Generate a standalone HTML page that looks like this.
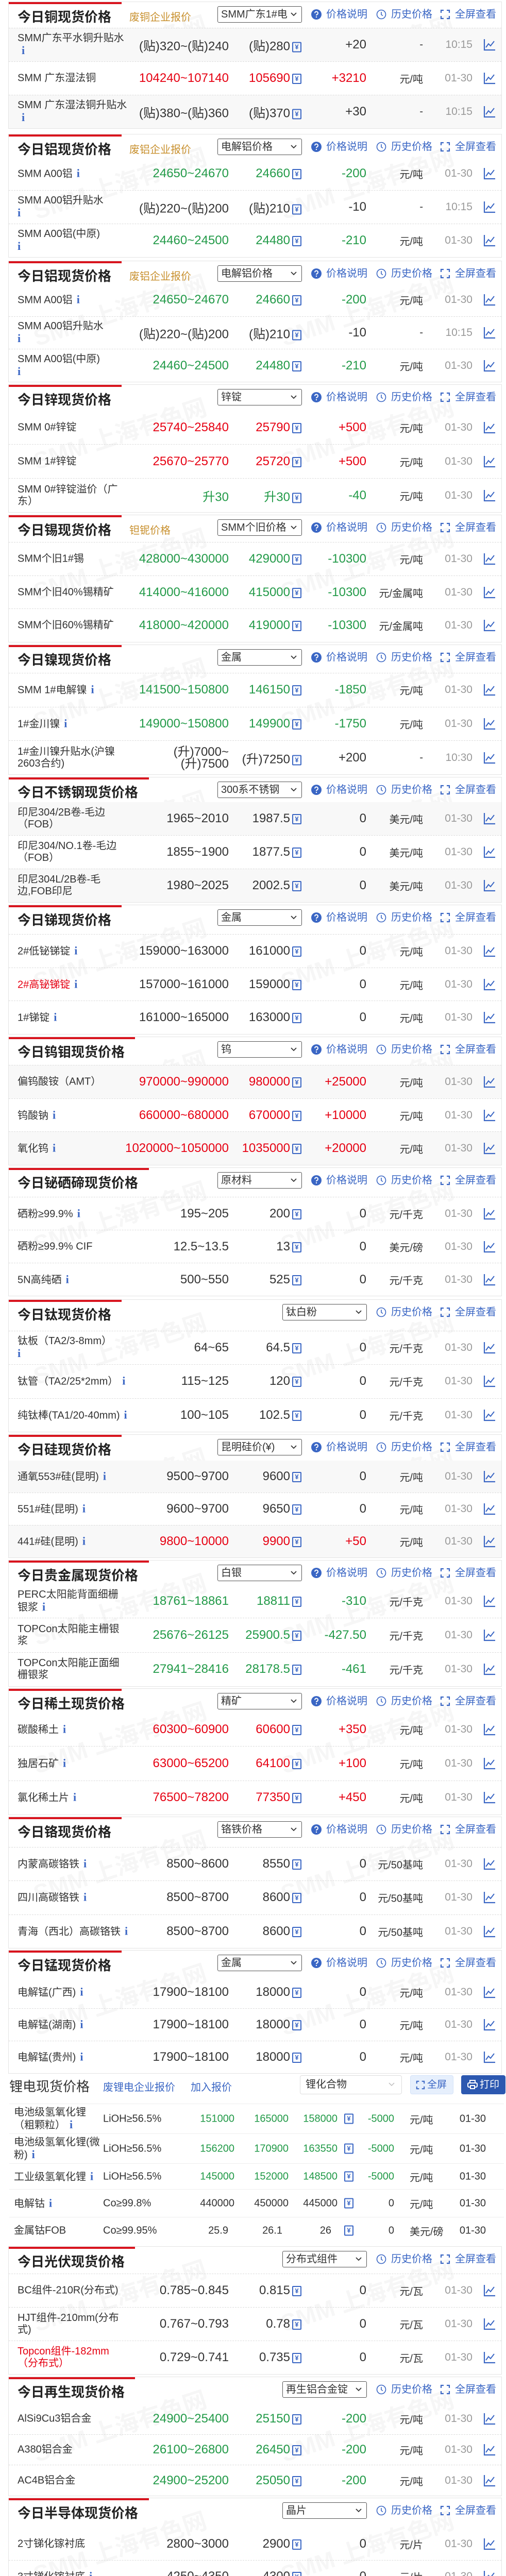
<!DOCTYPE html>
<html><head><meta charset="utf-8">
<style>
*{margin:0;padding:0;box-sizing:border-box}
html,body{width:982px;height:5097px;overflow:hidden;background:#fff}
body{font-family:"Liberation Sans","Noto Sans CJK SC",sans-serif;color:#333}
#pg{position:relative;width:982px;height:5097px;overflow:hidden}
.card{position:absolute;left:16px;width:958px;border:1px solid #e4e4e4;background:#fff;overflow:hidden;display:flex;flex-direction:column}
.bar{position:absolute;left:0;top:0;height:4px;background:#d9141e;z-index:3}
.hd{height:50px;flex:none;position:relative;z-index:2}
.t{position:absolute;left:17px;top:9px;font-size:26px;font-weight:bold;color:#222;white-space:nowrap}
.sub{position:absolute;left:234px;top:13px;font-size:20px;color:#c8902e;white-space:nowrap}
.sel{position:absolute;left:405px;top:8px;width:164px;height:32px;border:1px solid #555;border-radius:3px;font-size:20px;line-height:30px;padding-left:6px;color:#333;white-space:nowrap;overflow:hidden;background:#fff}
.sel.np{left:531px}
.sel svg{position:absolute;right:8px;top:10px}
.lk{position:absolute;top:11px;font-size:20px;color:#3a66c4;white-space:nowrap;line-height:26px}
.lk svg{position:absolute;left:-29px;top:3px}
.l1{left:616px}.l2{left:742px}.l3{left:866px}
.r{flex:1;position:relative;border-top:1px dashed #dcdcdc;z-index:2}
.r:nth-child(4){background:#f8f8f8}
.r>div{position:absolute;top:50%;transform:translateY(-50%);white-space:nowrap}
.n{left:17px;width:215px;font-size:20px;line-height:23px;white-space:normal!important;color:#333}
.n.red{color:#e60012}
em{font-style:normal;font-family:"Liberation Serif",serif;font-weight:bold;color:#3a66c4;font-size:22px;margin-left:8px}
.v{right:529px;font-size:24px}
.a{right:388px;font-size:24px}
.c{right:262px;font-size:24px}
.u{right:152px;font-size:20px}
.d{right:56px;font-size:21px;color:#9a9a9a}
.ch{position:absolute;left:921px;top:50%;margin-top:-12px}
.g{color:#229a48}.rd{color:#e60012}
.y{display:inline-block;width:18px;height:20px;border:2px solid #3a66c4;color:#3a66c4;font-size:13px;line-height:16px;text-align:center;vertical-align:2px;margin-left:4px;font-weight:bold;border-radius:2px}
.wm{position:absolute;font-size:46px;font-weight:bold;color:rgba(0,0,0,0.035);transform:rotate(-18deg);white-space:nowrap;z-index:1;top:60px}
.w1{left:40px}.w2{left:520px}
.li{position:absolute;left:0;top:4025px;width:982px;height:335px;background:#fff;overflow:hidden}
.li .lt{position:absolute;left:18px;top:5px;font-size:26px;color:#333}
.li .ll{position:absolute;top:10px;font-size:20px;color:#3a66c4}
.li .ls{position:absolute;left:582px;top:3px;width:198px;height:37px;border:1px solid #ddd;border-radius:4px;font-size:20px;line-height:35px;padding-left:10px}
.li .ls svg{position:absolute;right:12px;top:12px}
.b1{position:absolute;left:796px;top:3px;width:84px;height:37px;background:#e6effc;border:1px solid #d3e2f8;border-radius:4px;color:#3a66c4;font-size:19px;line-height:35px;padding-left:32px}
.b2{position:absolute;left:895px;top:3px;width:86px;height:37px;background:#2c58b0;border-radius:4px;color:#fff;font-size:19px;line-height:37px;padding-left:36px}
.lr{position:absolute;left:18px;width:960px;border-top:1px solid #eee}
.lr>div{position:absolute;top:50%;transform:translateY(-50%);white-space:nowrap;font-size:20px}
.lr .ln{left:9px;width:170px;white-space:normal;line-height:23px}
.lr .sp{left:182px}
.lr .lo{right:523px}.lr .hi{right:418px}.lr .av{right:323px}.lr .yy{left:646px}
.lr .cg{right:213px}.lr .un{left:777px}.lr .dt{right:35px}
</style></head><body><div id="pg">
<svg width="0" height="0" style="position:absolute;left:0;top:0">
<defs>
<symbol id="q" viewBox="0 0 20 20"><circle cx="10" cy="10" r="10" fill="#3a66c4"/><path d="M7 7.5a3 3 0 1 1 4 2.8c-.8.4-1 .8-1 1.7" stroke="#fff" stroke-width="2" fill="none"/><circle cx="10" cy="15" r="1.2" fill="#fff"/></symbol>
<symbol id="k" viewBox="0 0 20 20"><circle cx="10" cy="10" r="8.5" stroke="#3a66c4" stroke-width="1.6" fill="none"/><path d="M10 5v5.5l3 2" stroke="#3a66c4" stroke-width="1.6" fill="none"/></symbol>
<symbol id="f" viewBox="0 0 20 20"><path d="M2 7V2h5M13 2h5v5M18 13v5h-5M7 18H2v-5" stroke="#3a66c4" stroke-width="2.2" fill="none"/></symbol>
<symbol id="c" viewBox="0 0 24 24"><path d="M2 1v21h21" stroke="#3a66c4" stroke-width="2.2" fill="none"/><path d="M5 17l5-7 4 4 7-9" stroke="#3a66c4" stroke-width="2" fill="none"/></symbol>
<symbol id="v" viewBox="0 0 14 10"><path d="M2 2l5 5 5-5" stroke="#333" stroke-width="1.8" fill="none"/></symbol>
</defs></svg>

<div class="card" style="top:3px;height:247px"><div class="bar" style="width:219px"></div><span class="wm w1">SMM 上海有色网</span><span class="wm w2">SMM 上海有色网</span>
<div class="hd"><div class="t">今日铜现货价格</div><div class="sub">废铜企业报价</div><div class="sel">SMM广东1#电<svg width="14" height="10"><use href="#v"/></svg></div><div class="lk l1"><svg width="20" height="20"><use href="#q"/></svg>价格说明</div><div class="lk l2"><svg width="20" height="20"><use href="#k"/></svg>历史价格</div><div class="lk l3"><svg width="20" height="20"><use href="#f"/></svg>全屏查看</div></div>
<div class="r" style="background:#f8f8f8"><div class="n">SMM广东平水铜升贴水<em>i</em></div><div class="v">(贴)320~(贴)240</div><div class="a">(贴)280<span class="y">¥</span></div><div class="c">+20</div><div class="u">-</div><div class="d">10:15</div><svg class="ch" width="24" height="24"><use href="#c"/></svg></div>
<div class="r" style="background:#fff"><div class="n">SMM 广东湿法铜</div><div class="v rd">104240~107140</div><div class="a rd">105690<span class="y">¥</span></div><div class="c rd">+3210</div><div class="u">元/吨</div><div class="d">01-30</div><svg class="ch" width="24" height="24"><use href="#c"/></svg></div>
<div class="r" style="background:#f8f8f8"><div class="n">SMM 广东湿法铜升贴水<em>i</em></div><div class="v">(贴)380~(贴)360</div><div class="a">(贴)370<span class="y">¥</span></div><div class="c">+30</div><div class="u">-</div><div class="d">10:15</div><svg class="ch" width="24" height="24"><use href="#c"/></svg></div>
</div>

<div class="card" style="top:260px;height:240px"><div class="bar" style="width:219px"></div><span class="wm w1">SMM 上海有色网</span><span class="wm w2">SMM 上海有色网</span>
<div class="hd" style="height:44px"><div class="t">今日铝现货价格</div><div class="sub">废铝企业报价</div><div class="sel">电解铝价格<svg width="14" height="10"><use href="#v"/></svg></div><div class="lk l1"><svg width="20" height="20"><use href="#q"/></svg>价格说明</div><div class="lk l2"><svg width="20" height="20"><use href="#k"/></svg>历史价格</div><div class="lk l3"><svg width="20" height="20"><use href="#f"/></svg>全屏查看</div></div>
<div class="r" style="border-top:none"><div class="n">SMM A00铝<em>i</em></div><div class="v g">24650~24670</div><div class="a g">24660<span class="y">¥</span></div><div class="c g">-200</div><div class="u">元/吨</div><div class="d">01-30</div><svg class="ch" width="24" height="24"><use href="#c"/></svg></div>
<div class="r"><div class="n">SMM A00铝升贴水<br><em style="margin:0">i</em></div><div class="v">(贴)220~(贴)200</div><div class="a">(贴)210<span class="y">¥</span></div><div class="c">-10</div><div class="u">-</div><div class="d">10:15</div><svg class="ch" width="24" height="24"><use href="#c"/></svg></div>
<div class="r"><div class="n">SMM A00铝(中原)<br><em style="margin:0">i</em></div><div class="v g">24460~24500</div><div class="a g">24480<span class="y">¥</span></div><div class="c g">-210</div><div class="u">元/吨</div><div class="d">01-30</div><svg class="ch" width="24" height="24"><use href="#c"/></svg></div>
</div>

<div class="card" style="top:506px;height:236px"><div class="bar" style="width:219px"></div><span class="wm w1">SMM 上海有色网</span><span class="wm w2">SMM 上海有色网</span>
<div class="hd" style="height:44px"><div class="t">今日铝现货价格</div><div class="sub">废铝企业报价</div><div class="sel">电解铝价格<svg width="14" height="10"><use href="#v"/></svg></div><div class="lk l1"><svg width="20" height="20"><use href="#q"/></svg>价格说明</div><div class="lk l2"><svg width="20" height="20"><use href="#k"/></svg>历史价格</div><div class="lk l3"><svg width="20" height="20"><use href="#f"/></svg>全屏查看</div></div>
<div class="r" style="border-top:none"><div class="n">SMM A00铝<em>i</em></div><div class="v g">24650~24670</div><div class="a g">24660<span class="y">¥</span></div><div class="c g">-200</div><div class="u">元/吨</div><div class="d">01-30</div><svg class="ch" width="24" height="24"><use href="#c"/></svg></div>
<div class="r"><div class="n">SMM A00铝升贴水<br><em style="margin:0">i</em></div><div class="v">(贴)220~(贴)200</div><div class="a">(贴)210<span class="y">¥</span></div><div class="c">-10</div><div class="u">-</div><div class="d">10:15</div><svg class="ch" width="24" height="24"><use href="#c"/></svg></div>
<div class="r"><div class="n">SMM A00铝(中原)<br><em style="margin:0">i</em></div><div class="v g">24460~24500</div><div class="a g">24480<span class="y">¥</span></div><div class="c g">-210</div><div class="u">元/吨</div><div class="d">01-30</div><svg class="ch" width="24" height="24"><use href="#c"/></svg></div>
</div>

<div class="card" style="top:746px;height:249px"><div class="bar" style="width:219px"></div><span class="wm w1">SMM 上海有色网</span><span class="wm w2">SMM 上海有色网</span>
<div class="hd"><div class="t">今日锌现货价格</div><div class="sel">锌锭<svg width="14" height="10"><use href="#v"/></svg></div><div class="lk l1"><svg width="20" height="20"><use href="#q"/></svg>价格说明</div><div class="lk l2"><svg width="20" height="20"><use href="#k"/></svg>历史价格</div><div class="lk l3"><svg width="20" height="20"><use href="#f"/></svg>全屏查看</div></div>
<div class="r" style="border-top:none"><div class="n">SMM 0#锌锭</div><div class="v rd">25740~25840</div><div class="a rd">25790<span class="y">¥</span></div><div class="c rd">+500</div><div class="u">元/吨</div><div class="d">01-30</div><svg class="ch" width="24" height="24"><use href="#c"/></svg></div>
<div class="r"><div class="n">SMM 1#锌锭</div><div class="v rd">25670~25770</div><div class="a rd">25720<span class="y">¥</span></div><div class="c rd">+500</div><div class="u">元/吨</div><div class="d">01-30</div><svg class="ch" width="24" height="24"><use href="#c"/></svg></div>
<div class="r"><div class="n">SMM 0#锌锭溢价（广东）</div><div class="v g">升30</div><div class="a g">升30<span class="y">¥</span></div><div class="c g">-40</div><div class="u">元/吨</div><div class="d">01-30</div><svg class="ch" width="24" height="24"><use href="#c"/></svg></div>
</div>

<div class="card" style="top:999px;height:248px"><div class="bar" style="width:219px"></div><span class="wm w1">SMM 上海有色网</span><span class="wm w2">SMM 上海有色网</span>
<div class="hd" style="height:52px"><div class="t">今日锡现货价格</div><div class="sub">钽铌价格</div><div class="sel">SMM个旧价格<svg width="14" height="10"><use href="#v"/></svg></div><div class="lk l1"><svg width="20" height="20"><use href="#q"/></svg>价格说明</div><div class="lk l2"><svg width="20" height="20"><use href="#k"/></svg>历史价格</div><div class="lk l3"><svg width="20" height="20"><use href="#f"/></svg>全屏查看</div></div>
<div class="r"><div class="n">SMM个旧1#锡</div><div class="v g">428000~430000</div><div class="a g">429000<span class="y">¥</span></div><div class="c g">-10300</div><div class="u">元/吨</div><div class="d">01-30</div><svg class="ch" width="24" height="24"><use href="#c"/></svg></div>
<div class="r"><div class="n">SMM个旧40%锡精矿</div><div class="v g">414000~416000</div><div class="a g">415000<span class="y">¥</span></div><div class="c g">-10300</div><div class="u">元/金属吨</div><div class="d">01-30</div><svg class="ch" width="24" height="24"><use href="#c"/></svg></div>
<div class="r"><div class="n">SMM个旧60%锡精矿</div><div class="v g">418000~420000</div><div class="a g">419000<span class="y">¥</span></div><div class="c g">-10300</div><div class="u">元/金属吨</div><div class="d">01-30</div><svg class="ch" width="24" height="24"><use href="#c"/></svg></div>
</div>

<div class="card" style="top:1251px;height:253px"><div class="bar" style="width:219px"></div><span class="wm w1">SMM 上海有色网</span><span class="wm w2">SMM 上海有色网</span>
<div class="hd" style="height:54px"><div class="t">今日镍现货价格</div><div class="sel">金属<svg width="14" height="10"><use href="#v"/></svg></div><div class="lk l1"><svg width="20" height="20"><use href="#q"/></svg>价格说明</div><div class="lk l2"><svg width="20" height="20"><use href="#k"/></svg>历史价格</div><div class="lk l3"><svg width="20" height="20"><use href="#f"/></svg>全屏查看</div></div>
<div class="r"><div class="n">SMM 1#电解镍<em>i</em></div><div class="v g">141500~150800</div><div class="a g">146150<span class="y">¥</span></div><div class="c g">-1850</div><div class="u">元/吨</div><div class="d">01-30</div><svg class="ch" width="24" height="24"><use href="#c"/></svg></div>
<div class="r"><div class="n">1#金川镍<em>i</em></div><div class="v g">149000~150800</div><div class="a g">149900<span class="y">¥</span></div><div class="c g">-1750</div><div class="u">元/吨</div><div class="d">01-30</div><svg class="ch" width="24" height="24"><use href="#c"/></svg></div>
<div class="r"><div class="n">1#金川镍升贴水(沪镍2603合约)</div><div class="v" style="text-align:right;line-height:23px">(升)7000~<br>(升)7500</div><div class="a">(升)7250<span class="y">¥</span></div><div class="c">+200</div><div class="u">-</div><div class="d">10:30</div><svg class="ch" width="24" height="24"><use href="#c"/></svg></div>
</div>

<div class="card" style="top:1508px;height:244px"><div class="bar" style="width:272px"></div><span class="wm w1">SMM 上海有色网</span><span class="wm w2">SMM 上海有色网</span>
<div class="hd" style="height:48px"><div class="t">今日不锈钢现货价格</div><div class="sel">300系不锈钢<svg width="14" height="10"><use href="#v"/></svg></div><div class="lk l1"><svg width="20" height="20"><use href="#q"/></svg>价格说明</div><div class="lk l2"><svg width="20" height="20"><use href="#k"/></svg>历史价格</div><div class="lk l3"><svg width="20" height="20"><use href="#f"/></svg>全屏查看</div></div>
<div class="r" style="background:#f8f8f8;border-top:none"><div class="n">印尼304/2B卷-毛边（FOB）</div><div class="v">1965~2010</div><div class="a">1987.5<span class="y">¥</span></div><div class="c">0</div><div class="u">美元/吨</div><div class="d">01-30</div><svg class="ch" width="24" height="24"><use href="#c"/></svg></div>
<div class="r" style="background:#fff"><div class="n">印尼304/NO.1卷-毛边（FOB）</div><div class="v">1855~1900</div><div class="a">1877.5<span class="y">¥</span></div><div class="c">0</div><div class="u">美元/吨</div><div class="d">01-30</div><svg class="ch" width="24" height="24"><use href="#c"/></svg></div>
<div class="r" style="background:#f8f8f8"><div class="n">印尼304L/2B卷-毛边,FOB印尼</div><div class="v">1980~2025</div><div class="a">2002.5<span class="y">¥</span></div><div class="c">0</div><div class="u">美元/吨</div><div class="d">01-30</div><svg class="ch" width="24" height="24"><use href="#c"/></svg></div>
</div>

<div class="card" style="top:1756px;height:252px"><div class="bar" style="width:219px"></div><span class="wm w1">SMM 上海有色网</span><span class="wm w2">SMM 上海有色网</span>
<div class="hd" style="height:56px"><div class="t">今日锑现货价格</div><div class="sel">金属<svg width="14" height="10"><use href="#v"/></svg></div><div class="lk l1"><svg width="20" height="20"><use href="#q"/></svg>价格说明</div><div class="lk l2"><svg width="20" height="20"><use href="#k"/></svg>历史价格</div><div class="lk l3"><svg width="20" height="20"><use href="#f"/></svg>全屏查看</div></div>
<div class="r"><div class="n">2#低铋锑锭<em>i</em></div><div class="v">159000~163000</div><div class="a">161000<span class="y">¥</span></div><div class="c">0</div><div class="u">元/吨</div><div class="d">01-30</div><svg class="ch" width="24" height="24"><use href="#c"/></svg></div>
<div class="r"><div class="n red">2#高铋锑锭<em>i</em></div><div class="v">157000~161000</div><div class="a">159000<span class="y">¥</span></div><div class="c">0</div><div class="u">元/吨</div><div class="d">01-30</div><svg class="ch" width="24" height="24"><use href="#c"/></svg></div>
<div class="r"><div class="n">1#锑锭<em>i</em></div><div class="v">161000~165000</div><div class="a">163000<span class="y">¥</span></div><div class="c">0</div><div class="u">元/吨</div><div class="d">01-30</div><svg class="ch" width="24" height="24"><use href="#c"/></svg></div>
</div>

<div class="card" style="top:2012px;height:250px"><div class="bar" style="width:245px"></div><span class="wm w1">SMM 上海有色网</span><span class="wm w2">SMM 上海有色网</span>
<div class="hd" style="height:54px"><div class="t">今日钨钼现货价格</div><div class="sel">钨<svg width="14" height="10"><use href="#v"/></svg></div><div class="lk l1"><svg width="20" height="20"><use href="#q"/></svg>价格说明</div><div class="lk l2"><svg width="20" height="20"><use href="#k"/></svg>历史价格</div><div class="lk l3"><svg width="20" height="20"><use href="#f"/></svg>全屏查看</div></div>
<div class="r" style="background:#f8f8f8"><div class="n">偏钨酸铵（AMT）</div><div class="v rd">970000~990000</div><div class="a rd">980000<span class="y">¥</span></div><div class="c rd">+25000</div><div class="u">元/吨</div><div class="d">01-30</div><svg class="ch" width="24" height="24"><use href="#c"/></svg></div>
<div class="r" style="background:#fff"><div class="n">钨酸钠<em>i</em></div><div class="v rd">660000~680000</div><div class="a rd">670000<span class="y">¥</span></div><div class="c rd">+10000</div><div class="u">元/吨</div><div class="d">01-30</div><svg class="ch" width="24" height="24"><use href="#c"/></svg></div>
<div class="r" style="background:#f8f8f8"><div class="n">氧化钨<em>i</em></div><div class="v rd">1020000~1050000</div><div class="a rd">1035000<span class="y">¥</span></div><div class="c rd">+20000</div><div class="u">元/吨</div><div class="d">01-30</div><svg class="ch" width="24" height="24"><use href="#c"/></svg></div>
</div>

<div class="card" style="top:2266px;height:250px"><div class="bar" style="width:272px"></div><span class="wm w1">SMM 上海有色网</span><span class="wm w2">SMM 上海有色网</span>
<div class="hd" style="height:56px"><div class="t">今日铋硒碲现货价格</div><div class="sel">原材料<svg width="14" height="10"><use href="#v"/></svg></div><div class="lk l1"><svg width="20" height="20"><use href="#q"/></svg>价格说明</div><div class="lk l2"><svg width="20" height="20"><use href="#k"/></svg>历史价格</div><div class="lk l3"><svg width="20" height="20"><use href="#f"/></svg>全屏查看</div></div>
<div class="r"><div class="n">硒粉≥99.9%<em>i</em></div><div class="v">195~205</div><div class="a">200<span class="y">¥</span></div><div class="c">0</div><div class="u">元/千克</div><div class="d">01-30</div><svg class="ch" width="24" height="24"><use href="#c"/></svg></div>
<div class="r"><div class="n">硒粉≥99.9% CIF</div><div class="v">12.5~13.5</div><div class="a">13<span class="y">¥</span></div><div class="c">0</div><div class="u">美元/磅</div><div class="d">01-30</div><svg class="ch" width="24" height="24"><use href="#c"/></svg></div>
<div class="r"><div class="n">5N高纯硒<em>i</em></div><div class="v">500~550</div><div class="a">525<span class="y">¥</span></div><div class="c">0</div><div class="u">元/千克</div><div class="d">01-30</div><svg class="ch" width="24" height="24"><use href="#c"/></svg></div>
</div>

<div class="card" style="top:2522px;height:258px"><div class="bar" style="width:219px"></div><span class="wm w1">SMM 上海有色网</span><span class="wm w2">SMM 上海有色网</span>
<div class="hd" style="height:60px"><div class="t">今日钛现货价格</div><div class="sel np">钛白粉<svg width="14" height="10"><use href="#v"/></svg></div><div class="lk l2"><svg width="20" height="20"><use href="#k"/></svg>历史价格</div><div class="lk l3"><svg width="20" height="20"><use href="#f"/></svg>全屏查看</div></div>
<div class="r"><div class="n">钛板（TA2/3-8mm）<br><em style="margin:0">i</em></div><div class="v">64~65</div><div class="a">64.5<span class="y">¥</span></div><div class="c">0</div><div class="u">元/千克</div><div class="d">01-30</div><svg class="ch" width="24" height="24"><use href="#c"/></svg></div>
<div class="r"><div class="n">钛管（TA2/25*2mm）<em>i</em></div><div class="v">115~125</div><div class="a">120<span class="y">¥</span></div><div class="c">0</div><div class="u">元/千克</div><div class="d">01-30</div><svg class="ch" width="24" height="24"><use href="#c"/></svg></div>
<div class="r"><div class="n">纯钛棒(TA1/20-40mm)<em>i</em></div><div class="v">100~105</div><div class="a">102.5<span class="y">¥</span></div><div class="c">0</div><div class="u">元/千克</div><div class="d">01-30</div><svg class="ch" width="24" height="24"><use href="#c"/></svg></div>
</div>

<div class="card" style="top:2784px;height:240px"><div class="bar" style="width:219px"></div><span class="wm w1">SMM 上海有色网</span><span class="wm w2">SMM 上海有色网</span>
<div class="hd" style="height:50px"><div class="t">今日硅现货价格</div><div class="sel">昆明硅价(¥)<svg width="14" height="10"><use href="#v"/></svg></div><div class="lk l1"><svg width="20" height="20"><use href="#q"/></svg>价格说明</div><div class="lk l2"><svg width="20" height="20"><use href="#k"/></svg>历史价格</div><div class="lk l3"><svg width="20" height="20"><use href="#f"/></svg>全屏查看</div></div>
<div class="r" style="background:#f8f8f8;border-top:none"><div class="n">通氧553#硅(昆明)<em>i</em></div><div class="v">9500~9700</div><div class="a">9600<span class="y">¥</span></div><div class="c">0</div><div class="u">元/吨</div><div class="d">01-30</div><svg class="ch" width="24" height="24"><use href="#c"/></svg></div>
<div class="r" style="background:#fff"><div class="n">551#硅(昆明)<em>i</em></div><div class="v">9600~9700</div><div class="a">9650<span class="y">¥</span></div><div class="c">0</div><div class="u">元/吨</div><div class="d">01-30</div><svg class="ch" width="24" height="24"><use href="#c"/></svg></div>
<div class="r" style="background:#f8f8f8"><div class="n">441#硅(昆明)<em>i</em></div><div class="v rd">9800~10000</div><div class="a rd">9900<span class="y">¥</span></div><div class="c rd">+50</div><div class="u">元/吨</div><div class="d">01-30</div><svg class="ch" width="24" height="24"><use href="#c"/></svg></div>
</div>

<div class="card" style="top:3028px;height:246px"><div class="bar" style="width:272px"></div><span class="wm w1">SMM 上海有色网</span><span class="wm w2">SMM 上海有色网</span>
<div class="hd" style="height:46px"><div class="t">今日贵金属现货价格</div><div class="sel">白银<svg width="14" height="10"><use href="#v"/></svg></div><div class="lk l1"><svg width="20" height="20"><use href="#q"/></svg>价格说明</div><div class="lk l2"><svg width="20" height="20"><use href="#k"/></svg>历史价格</div><div class="lk l3"><svg width="20" height="20"><use href="#f"/></svg>全屏查看</div></div>
<div class="r" style="border-top:none"><div class="n">PERC太阳能背面细栅银浆<em>i</em></div><div class="v g">18761~18861</div><div class="a g">18811<span class="y">¥</span></div><div class="c g">-310</div><div class="u">元/千克</div><div class="d">01-30</div><svg class="ch" width="24" height="24"><use href="#c"/></svg></div>
<div class="r"><div class="n">TOPCon太阳能主栅银浆</div><div class="v g">25676~26125</div><div class="a g">25900.5<span class="y">¥</span></div><div class="c g">-427.50</div><div class="u">元/千克</div><div class="d">01-30</div><svg class="ch" width="24" height="24"><use href="#c"/></svg></div>
<div class="r"><div class="n">TOPCon太阳能正面细栅银浆</div><div class="v g">27941~28416</div><div class="a g">28178.5<span class="y">¥</span></div><div class="c g">-461</div><div class="u">元/千克</div><div class="d">01-30</div><svg class="ch" width="24" height="24"><use href="#c"/></svg></div>
</div>

<div class="card" style="top:3277px;height:246px"><div class="bar" style="width:219px"></div><span class="wm w1">SMM 上海有色网</span><span class="wm w2">SMM 上海有色网</span>
<div class="hd" style="height:46px"><div class="t">今日稀土现货价格</div><div class="sel">精矿<svg width="14" height="10"><use href="#v"/></svg></div><div class="lk l1"><svg width="20" height="20"><use href="#q"/></svg>价格说明</div><div class="lk l2"><svg width="20" height="20"><use href="#k"/></svg>历史价格</div><div class="lk l3"><svg width="20" height="20"><use href="#f"/></svg>全屏查看</div></div>
<div class="r" style="border-top:none"><div class="n">碳酸稀土<em>i</em></div><div class="v rd">60300~60900</div><div class="a rd">60600<span class="y">¥</span></div><div class="c rd">+350</div><div class="u">元/吨</div><div class="d">01-30</div><svg class="ch" width="24" height="24"><use href="#c"/></svg></div>
<div class="r"><div class="n">独居石矿<em>i</em></div><div class="v rd">63000~65200</div><div class="a rd">64100<span class="y">¥</span></div><div class="c rd">+100</div><div class="u">元/吨</div><div class="d">01-30</div><svg class="ch" width="24" height="24"><use href="#c"/></svg></div>
<div class="r"><div class="n">氯化稀土片<em>i</em></div><div class="v rd">76500~78200</div><div class="a rd">77350<span class="y">¥</span></div><div class="c rd">+450</div><div class="u">元/吨</div><div class="d">01-30</div><svg class="ch" width="24" height="24"><use href="#c"/></svg></div>
</div>

<div class="card" style="top:3526px;height:256px"><div class="bar" style="width:219px"></div><span class="wm w1">SMM 上海有色网</span><span class="wm w2">SMM 上海有色网</span>
<div class="hd" style="height:58px"><div class="t">今日铬现货价格</div><div class="sel">铬铁价格<svg width="14" height="10"><use href="#v"/></svg></div><div class="lk l1"><svg width="20" height="20"><use href="#q"/></svg>价格说明</div><div class="lk l2"><svg width="20" height="20"><use href="#k"/></svg>历史价格</div><div class="lk l3"><svg width="20" height="20"><use href="#f"/></svg>全屏查看</div></div>
<div class="r"><div class="n">内蒙高碳铬铁<em>i</em></div><div class="v">8500~8600</div><div class="a">8550<span class="y">¥</span></div><div class="c">0</div><div class="u">元/50基吨</div><div class="d">01-30</div><svg class="ch" width="24" height="24"><use href="#c"/></svg></div>
<div class="r"><div class="n">四川高碳铬铁<em>i</em></div><div class="v">8500~8700</div><div class="a">8600<span class="y">¥</span></div><div class="c">0</div><div class="u">元/50基吨</div><div class="d">01-30</div><svg class="ch" width="24" height="24"><use href="#c"/></svg></div>
<div class="r"><div class="n">青海（西北）高碳铬铁<em>i</em></div><div class="v">8500~8700</div><div class="a">8600<span class="y">¥</span></div><div class="c">0</div><div class="u">元/50基吨</div><div class="d">01-30</div><svg class="ch" width="24" height="24"><use href="#c"/></svg></div>
</div>

<div class="card" style="top:3785px;height:240px"><div class="bar" style="width:219px"></div><span class="wm w1">SMM 上海有色网</span><span class="wm w2">SMM 上海有色网</span>
<div class="hd" style="height:50px"><div class="t">今日锰现货价格</div><div class="sel">金属<svg width="14" height="10"><use href="#v"/></svg></div><div class="lk l1"><svg width="20" height="20"><use href="#q"/></svg>价格说明</div><div class="lk l2"><svg width="20" height="20"><use href="#k"/></svg>历史价格</div><div class="lk l3"><svg width="20" height="20"><use href="#f"/></svg>全屏查看</div></div>
<div class="r" style="border-top:none"><div class="n">电解锰(广西)<em>i</em></div><div class="v">17900~18100</div><div class="a">18000<span class="y">¥</span></div><div class="c">0</div><div class="u">元/吨</div><div class="d">01-30</div><svg class="ch" width="24" height="24"><use href="#c"/></svg></div>
<div class="r"><div class="n">电解锰(湖南)<em>i</em></div><div class="v">17900~18100</div><div class="a">18000<span class="y">¥</span></div><div class="c">0</div><div class="u">元/吨</div><div class="d">01-30</div><svg class="ch" width="24" height="24"><use href="#c"/></svg></div>
<div class="r"><div class="n">电解锰(贵州)<em>i</em></div><div class="v">17900~18100</div><div class="a">18000<span class="y">¥</span></div><div class="c">0</div><div class="u">元/吨</div><div class="d">01-30</div><svg class="ch" width="24" height="24"><use href="#c"/></svg></div>
</div>

<div class="li">
<div class="lt">锂电现货价格</div>
<div class="ll" style="left:200px">废锂电企业报价</div>
<div class="ll" style="left:370px">加入报价</div>
<div class="ls">锂化合物<svg width="14" height="10"><path d="M2 2l5 5 5-5" stroke="#bbb" stroke-width="1.5" fill="none"/></svg></div>
<div class="b1"><svg width="18" height="18" style="position:absolute;left:10px;top:9px"><use href="#f"/></svg>全屏</div>
<div class="b2"><svg width="20" height="18" style="position:absolute;left:12px;top:9px" viewBox="0 0 20 18"><rect x="5" y="1" width="10" height="5" fill="none" stroke="#fff" stroke-width="2"/><rect x="1" y="6" width="18" height="8" rx="2" fill="none" stroke="#fff" stroke-width="2"/><rect x="6" y="11" width="8" height="6" fill="#2c58b0" stroke="#fff" stroke-width="2"/></svg>打印</div>
<div class="lr" style="top:58px;height:58px"><div class="ln">电池级氢氧化锂（粗颗粒）<em>i</em></div><div class="sp">LiOH≥56.5%</div><div class="lo g">151000</div><div class="hi g">165000</div><div class="av g">158000</div><div class="yy"><span class="y">¥</span></div><div class="cg g">-5000</div><div class="un">元/吨</div><div class="dt">01-30</div></div>
<div class="lr" style="top:116px;height:58px"><div class="ln">电池级氢氧化锂(微粉)<em>i</em></div><div class="sp">LiOH≥56.5%</div><div class="lo g">156200</div><div class="hi g">170900</div><div class="av g">163550</div><div class="yy"><span class="y">¥</span></div><div class="cg g">-5000</div><div class="un">元/吨</div><div class="dt">01-30</div></div>
<div class="lr" style="top:174px;height:50px"><div class="ln">工业级氢氧化锂<em>i</em></div><div class="sp">LiOH≥56.5%</div><div class="lo g">145000</div><div class="hi g">152000</div><div class="av g">148500</div><div class="yy"><span class="y">¥</span></div><div class="cg g">-5000</div><div class="un">元/吨</div><div class="dt">01-30</div></div>
<div class="lr" style="top:224px;height:54px"><div class="ln">电解钴<em>i</em></div><div class="sp">Co≥99.8%</div><div class="lo">440000</div><div class="hi">450000</div><div class="av">445000</div><div class="yy"><span class="y">¥</span></div><div class="cg">0</div><div class="un">元/吨</div><div class="dt">01-30</div></div>
<div class="lr" style="top:278px;height:52px"><div class="ln">金属钴FOB</div><div class="sp">Co≥99.95%</div><div class="lo" style="right:535px">25.9</div><div class="hi" style="right:430px">26.1</div><div class="av" style="right:335px">26</div><div class="yy"><span class="y">¥</span></div><div class="cg">0</div><div class="un">美元/磅</div><div class="dt">01-30</div></div>
</div>

<div class="card" style="top:4360px;height:249px"><div class="bar" style="width:245px"></div><span class="wm w1">SMM 上海有色网</span><span class="wm w2">SMM 上海有色网</span>
<div class="hd" style="height:52px"><div class="t">今日光伏现货价格</div><div class="sel np">分布式组件<svg width="14" height="10"><use href="#v"/></svg></div><div class="lk l2"><svg width="20" height="20"><use href="#k"/></svg>历史价格</div><div class="lk l3"><svg width="20" height="20"><use href="#f"/></svg>全屏查看</div></div>
<div class="r"><div class="n">BC组件-210R(分布式)</div><div class="v">0.785~0.845</div><div class="a">0.815<span class="y">¥</span></div><div class="c">0</div><div class="u">元/瓦</div><div class="d">01-30</div><svg class="ch" width="24" height="24"><use href="#c"/></svg></div>
<div class="r"><div class="n">HJT组件-210mm(分布式)</div><div class="v">0.767~0.793</div><div class="a">0.78<span class="y">¥</span></div><div class="c">0</div><div class="u">元/瓦</div><div class="d">01-30</div><svg class="ch" width="24" height="24"><use href="#c"/></svg></div>
<div class="r"><div class="n red">Topcon组件-182mm（分布式）</div><div class="v">0.729~0.741</div><div class="a">0.735<span class="y">¥</span></div><div class="c">0</div><div class="u">元/瓦</div><div class="d">01-30</div><svg class="ch" width="24" height="24"><use href="#c"/></svg></div>
</div>

<div class="card" style="top:4613px;height:232px"><div class="bar" style="width:245px"></div><span class="wm w1">SMM 上海有色网</span><span class="wm w2">SMM 上海有色网</span>
<div class="hd" style="height:52px"><div class="t">今日再生现货价格</div><div class="sel np">再生铝合金锭<svg width="14" height="10"><use href="#v"/></svg></div><div class="lk l2"><svg width="20" height="20"><use href="#k"/></svg>历史价格</div><div class="lk l3"><svg width="20" height="20"><use href="#f"/></svg>全屏查看</div></div>
<div class="r" style="border-top:none"><div class="n">AlSi9Cu3铝合金</div><div class="v g">24900~25400</div><div class="a g">25150<span class="y">¥</span></div><div class="c g">-200</div><div class="u">元/吨</div><div class="d">01-30</div><svg class="ch" width="24" height="24"><use href="#c"/></svg></div>
<div class="r"><div class="n">A380铝合金</div><div class="v g">26100~26800</div><div class="a g">26450<span class="y">¥</span></div><div class="c g">-200</div><div class="u">元/吨</div><div class="d">01-30</div><svg class="ch" width="24" height="24"><use href="#c"/></svg></div>
<div class="r"><div class="n">AC4B铝合金</div><div class="v g">24900~25200</div><div class="a g">25050<span class="y">¥</span></div><div class="c g">-200</div><div class="u">元/吨</div><div class="d">01-30</div><svg class="ch" width="24" height="24"><use href="#c"/></svg></div>
</div>

<div class="card" style="top:4848px;height:247px"><div class="bar" style="width:272px"></div><span class="wm w1">SMM 上海有色网</span><span class="wm w2">SMM 上海有色网</span>
<div class="hd" style="height:58px"><div class="t">今日半导体现货价格</div><div class="sel np">晶片<svg width="14" height="10"><use href="#v"/></svg></div><div class="lk l2"><svg width="20" height="20"><use href="#k"/></svg>历史价格</div><div class="lk l3"><svg width="20" height="20"><use href="#f"/></svg>全屏查看</div></div>
<div class="r" style="border-top:none"><div class="n">2寸锑化镓衬底</div><div class="v">2800~3000</div><div class="a">2900<span class="y">¥</span></div><div class="c">0</div><div class="u">元/片</div><div class="d">01-30</div><svg class="ch" width="24" height="24"><use href="#c"/></svg></div>
<div class="r"><div class="n">3寸锑化镓衬底<em>i</em></div><div class="v">4250~4350</div><div class="a">4300<span class="y">¥</span></div><div class="c">0</div><div class="u">元/片</div><div class="d">01-30</div><svg class="ch" width="24" height="24"><use href="#c"/></svg></div>
<div class="r"><div class="n">2寸锑化铟衬底</div><div class="v">6450~6650</div><div class="a">6550<span class="y">¥</span></div><div class="c">0</div><div class="u">元/片</div><div class="d">01-30</div><svg class="ch" width="24" height="24"><use href="#c"/></svg></div>
</div>

</div></body></html>
